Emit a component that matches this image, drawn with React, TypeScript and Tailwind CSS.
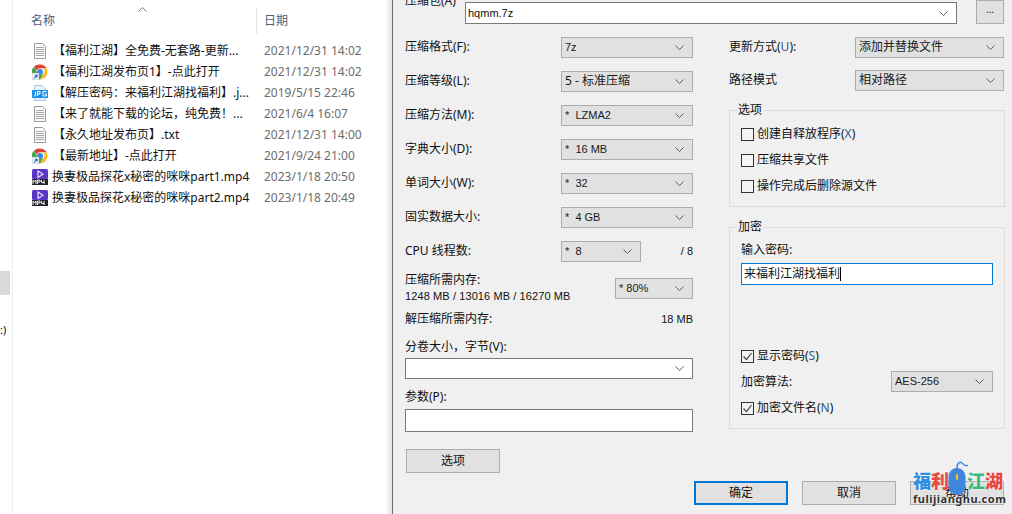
import React from 'react';

const FONT = 'font-["Noto_Sans","Noto_Sans_CJK_SC",sans-serif]';
const LATIN = 'font-["Liberation_Sans",sans-serif] text-[11px]';

const files = [
  { icon: 'doc', name: '【福利江湖】全免费-无套路-更新...', date: '2021/12/31 14:02' },
  { icon: 'chrome', name: '【福利江湖发布页1】-点此打开', date: '2021/12/31 14:02' },
  { icon: 'jpg', name: '【解压密码：来福利江湖找福利】.j...', date: '2019/5/15 22:46' },
  { icon: 'doc', name: '【来了就能下载的论坛，纯免费！...', date: '2021/6/4 16:07' },
  { icon: 'doc', name: '【永久地址发布页】.txt', date: '2021/12/31 14:00' },
  { icon: 'chrome', name: '【最新地址】-点此打开', date: '2021/9/24 21:00' },
  { icon: 'mp4', name: '换妻极品探花x秘密的咪咪part1.mp4', date: '2023/1/18 20:50' },
  { icon: 'mp4', name: '换妻极品探花x秘密的咪咪part2.mp4', date: '2023/1/18 20:49' },
];

const FileIcon: React.FC<{ type: string }> = ({ type }) => {
  if (type === 'chrome') {
    return (
      <svg width="16" height="16" viewBox="0 0 16 16" className="shrink-0">
        <path d="M8 0.5a7.5 7.5 0 0 1 6.5 3.75H8a3.75 3.75 0 0 0-3.4 2.2L2 2.8A7.5 7.5 0 0 1 8 0.5z" fill="#e0402f" />
        <path d="M14.5 4.25A7.5 7.5 0 0 1 8 15.5l3.2-5.5A3.75 3.75 0 0 0 11 4.25z" fill="#fbc02d" />
        <path d="M2 2.8l3.2 5.6A3.75 3.75 0 0 0 11.2 10L8 15.5A7.5 7.5 0 0 1 2 2.8z" fill="#3fa648" />
        <circle cx="8" cy="8" r="3" fill="#3f86e8" />
        <rect x="0" y="9" width="7" height="7" fill="#f4f6fa" stroke="#9aa3b0" strokeWidth="0.5" />
        <path d="M2 14.5l2.4-2.6M2.8 11.2h2.2v2.2" stroke="#2a5fb0" strokeWidth="1.1" fill="none" />
      </svg>
    );
  }
  if (type === 'jpg') {
    return (
      <svg width="16" height="16" viewBox="0 0 16 16" className="shrink-0">
        <path d="M2.5 0.5h7.5l3.5 3.5v11.5h-11z" fill="#e6f1fb" stroke="#a9c6e4" />
        <rect x="0" y="5" width="16" height="8" fill="#1e90e8" />
        <path d="M3.5 6.500v3.500l-.8 1H1.500M5.500 11V6.500h2.500v2.500H5.500M14.500 6.500h-3.500v4.500h3.500V9h-1.500" stroke="#fff" strokeWidth="1" fill="none" />
      </svg>
    );
  }
  if (type === 'mp4') {
    return (
      <svg width="16" height="16" viewBox="0 0 16 16" className="shrink-0">
        <rect x="0" y="0" width="16" height="10" rx="1.500" fill="#5b35c4" />
        <rect x="0" y="10" width="16" height="6" fill="#26242c" />
        <path d="M6 2l5 3.200-5 3.200z" fill="none" stroke="#e9e2ff" strokeWidth="1.200" />
        <path d="M1 15v-4l1.500 2 1.500-2v4M5.500 15v-4h2.500v2h-2.500M9.500 11v2.500h3M12 11v4" stroke="#fff" strokeWidth="0.900" fill="none" />
      </svg>
    );
  }
  return (
    <svg width="16" height="16" viewBox="0 0 16 16" className="shrink-0">
      <path d="M2.500 0.500h8l3 3v12h-11z" fill="#fafafa" stroke="#9a9a9a" />
      <path d="M4 4.500h8M4 6.500h8M4 8.500h8M4 10.500h8M4 12.500h8" stroke="#a8a8a8" strokeWidth="1" />
    </svg>
  );
};

const Chevron = () => (
  <svg width="9" height="5" viewBox="0 0 9 5" className="shrink-0">
    <path d="M0.500 0.500L4.500 4.500L8.500 0.500" fill="none" stroke="#5c5c5c" strokeWidth="1" />
  </svg>
);

const Select: React.FC<{ value?: string; className?: string; white?: boolean; latin?: boolean }> = ({ value, className = '', white, latin }) => (
  <div className={`h-[21px] flex items-center justify-between pl-[3px] pr-2 border leading-none text-[#1a1a1a] ${white ? 'bg-white border-[#7a7a7a]' : 'bg-[#e1e1e1] border-[#adadad]'} ${className}`}>
    <span className={`whitespace-pre ${latin ? LATIN : 'text-[12px]'}`}>{value}</span>
    <Chevron />
  </div>
);

const Button: React.FC<{ label: string; primary?: boolean; className?: string }> = ({ label, primary, className = '' }) => (
  <div className={`w-[94px] h-[24px] flex items-center justify-center bg-[#e1e1e1] text-[12px] text-[#111] ${primary ? 'border-2 border-[#0078d7]' : 'border border-[#adadad]'} ${className}`}>
    {label}
  </div>
);

const Check: React.FC<{ label: React.ReactNode; checked?: boolean }> = ({ label, checked }) => (
  <div className="flex items-center gap-[3px] text-[12px] text-[#111]">
    <div className="w-[13px] h-[13px] border border-[#333] bg-[#f4f4f4] flex items-center justify-center">
      {checked && (
        <svg width="11" height="11" viewBox="0 0 11 11">
          <path d="M1.500 5.500L4.500 8.500L9.500 2" fill="none" stroke="#444" strokeWidth="1.200" />
        </svg>
      )}
    </div>
    <span>{label}</span>
  </div>
);

const Key: React.FC<{ k: string }> = ({ k }) => <span className="text-[#33558a]">{k}</span>;

const leftRows = [
  { label: '压缩格式(F):', value: '7z', latin: true },
  { label: '压缩等级(L):', value: '5 - 标准压缩', latin: false },
  { label: '压缩方法(M):', value: '*  LZMA2', latin: true },
  { label: '字典大小(D):', value: '*  16 MB', latin: true },
  { label: '单词大小(W):', value: '*  32', latin: true },
  { label: '固实数据大小:', value: '*  4 GB', latin: true },
];

export default function App() {
  return (
    <div className={`w-[1012px] h-[514px] overflow-hidden flex bg-white text-[12px] ${FONT}`}>
      {/* 资源管理器 */}
      <div className="w-[392px] h-full shrink-0 flex relative">
        <div className="w-[13px] h-full border-r border-[#eeeeee] shrink-0 flex flex-col">
          <div className="h-[271px]" />
          <div className="w-[10px] h-[24px] bg-[#d9d9d9]" />
          <div className="mt-[26px] text-[11px] leading-[18px] text-[#111]">:)</div>
        </div>
        <div className="flex-1 min-w-0">
          <div className="h-[34px] pt-[7px] flex relative text-[#4c607a]">
            <div className="w-[244px] pl-[18px] pt-[1px] flex items-center border-r border-[#e5e5e5]">名称</div>
            <div className="pl-[7px] pt-[1px] flex items-center">日期</div>
            <svg width="9" height="5" viewBox="0 0 9 5" className="absolute left-[125px] top-[7px]">
              <path d="M0.500 4.500L4.500 0.500L8.500 4.500" fill="none" stroke="#777" />
            </svg>
          </div>
          <div className="mt-[6px] flex flex-col">
            {files.map((f) => (
              <div key={f.date + f.name} className="h-[21px] flex items-center">
                <div className="w-[244px] pl-[19px] flex items-center shrink-0">
                  <FileIcon type={f.icon} />
                  <span className={`${f.icon === 'mp4' ? 'ml-[4px]' : 'ml-[5px]'} whitespace-nowrap text-[#111]`}>{f.name}</span>
                </div>
                <span className="ml-[7px] text-[#6d6d6d] whitespace-nowrap">{f.date}</span>
              </div>
            ))}
          </div>
        </div>
        <div className="absolute right-0 top-0 w-[7px] h-full bg-gradient-to-r from-white to-[#e2e2e2]" />
      </div>

      {/* 压缩对话框 */}
      <div className="flex-1 h-full border-l border-[#6e6e6e] bg-[#f0f0f0] relative text-[#111]">
        <div className="flex items-start h-[30px] pl-[12px] pr-[7px]">
          <div className="w-[60px] -mt-[8px] leading-[18px]">压缩包(A)</div>
          <div className="w-[492px] h-[22px] mt-[2px] bg-white border border-[#7a7a7a] flex items-center justify-between pl-[2px] pr-2">
            <span className={LATIN}>hqmm.7z</span>
            <Chevron />
          </div>
          <div className="ml-[19px] w-[28px] h-[24px] bg-[#e1e1e1] border border-[#adadad] flex items-start justify-center text-[10px] leading-[17px]">...</div>
        </div>

        <div className="flex pl-[12px]">
          {/* 左栏 */}
          <div className="w-[288px] shrink-0">
            {leftRows.map((r) => (
              <div key={r.label} className="h-[34px] flex items-center justify-between">
                <span>{r.label}</span>
                <Select value={r.value} latin={r.latin} className="w-[132px]" />
              </div>
            ))}
            <div className="h-[34px] flex items-center">
              <span className="w-[156px]">CPU 线程数:</span>
              <Select value="*  8" latin className="w-[80px]" />
              <span className={`ml-auto ${LATIN}`}>/ 8</span>
            </div>
            <div className="flex justify-between items-center h-[32px] mt-[4px]">
              <div className="leading-[16px]">
                <div>压缩所需内存:</div>
                <div className={`${LATIN} tracking-[0.1px]`}>1248 MB / 13016 MB / 16270 MB</div>
              </div>
              <Select value="* 80%" latin className="w-[78px]" />
            </div>
            <div className="flex justify-between items-center h-[18px] mt-[6px]">
              <span>解压缩所需内存:</span>
              <span className={LATIN}>18 MB</span>
            </div>
            <div className="mt-[10px] leading-[18px]">分卷大小，字节(V):</div>
            <Select white className="w-full mt-[2px]" />
            <div className="mt-[9px] leading-[18px]">参数(P):</div>
            <div className="h-[23px] mt-[3px] bg-white border border-[#7a7a7a]" />
            <Button label="选项" className="mt-[17px] ml-[1px]" />
          </div>

          {/* 右栏 */}
          <div className="ml-[36px] w-[276px] shrink-0">
            <div className="h-[34px] flex items-center justify-between">
              <span>更新方式(<Key k="U" />):</span>
              <Select value="添加并替换文件" className="w-[149px] mr-[1px]" />
            </div>
            <div className="h-[32px] flex items-center justify-between">
              <span>路径模式</span>
              <Select value="相对路径" className="w-[149px] mr-[1px]" />
            </div>
            <fieldset className="mt-[7px] h-[104px] border border-[#dcdcdc] pl-[11px] pt-[8px] flex flex-col gap-[8px]">
              <legend className="-ml-[4px] px-[1px] leading-[14px]">选项</legend>
              <Check label={<>创建自释放程序(<Key k="X" />)</>} />
              <Check label="压缩共享文件" />
              <Check label="操作完成后删除源文件" />
            </fieldset>
            <fieldset className="mt-[13px] h-[209px] border border-[#dcdcdc] px-[11px] pt-[8px] flex flex-col">
              <legend className="-ml-[4px] px-[1px] leading-[14px]">加密</legend>
              <div className="leading-[16px]">输入密码:</div>
              <div className="h-[22px] mt-[5px] bg-white border-[1.500px] border-[#0078d7] flex items-center pl-[2px]">
                来福利江湖找福利<span className="w-px h-[14px] bg-black" />
              </div>
              <div className="mt-[62px]">
                <Check checked label={<>显示密码(<Key k="S" />)</>} />
              </div>
              <div className="mt-[6px] flex items-center justify-between">
                <span>加密算法:</span>
                <Select value="AES-256" latin className="w-[102px]" />
              </div>
              <div className="mt-[7px]">
                <Check checked label={<>加密文件名(<Key k="N" />)</>} />
              </div>
            </fieldset>
          </div>
        </div>

        <div className="absolute left-[301px] top-[481px] flex gap-[14px]">
          <Button label="确定" primary />
          <Button label="取消" />
          <Button label="帮助" />
        </div>

        {/* 水印 */}
        <div className="absolute left-[520px] top-[461px] w-[90px] h-[44px]">
          <div className="flex justify-between mt-[9px] h-[20px] text-[18px] leading-[20px] font-black font-['Noto_Sans_CJK_SC',sans-serif] [text-shadow:0_0_2px_#fff]">
            <span className="text-[#2f8fe0]">福<span className="text-[#e8483f]">利</span></span>
            <span className="text-[#3cb878]">江<span className="text-[#e8483f]">湖</span></span>
          </div>
          <div className="mt-[2px] text-[11px] leading-[13px] font-bold text-[#333] tracking-[0.500px] font-['Noto_Sans',sans-serif] whitespace-nowrap text-center [text-shadow:0_0_2px_#fff]">fulijianghu.com</div>
          <svg width="21" height="35" viewBox="0 0 21 35" className="absolute left-[35px] top-0">
            <path d="M9 7C9 2 12 0 14 2s4 4 6 2" fill="none" stroke="#3d8ad9" strokeWidth="1.500" />
            <rect x="0.500" y="7" width="17" height="27" rx="8.500" fill="#3f86dc" />
            <rect x="8" y="13" width="2" height="6" rx="1" fill="#f5c518" />
          </svg>
        </div>
      </div>
    </div>
  );
}
